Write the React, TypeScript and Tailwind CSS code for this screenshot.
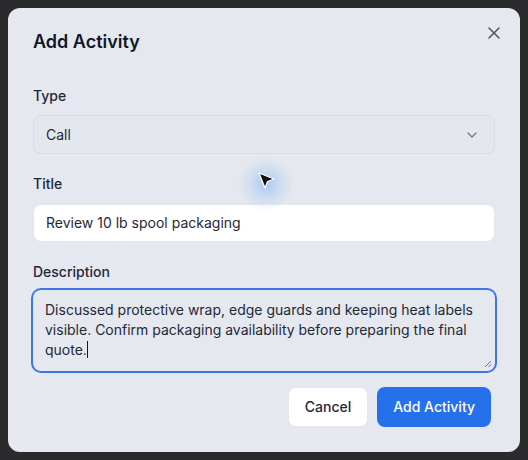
import { ChevronDown, X } from "lucide-react";

export default function App() {
  return (
    <div
      className="w-[528px] h-[460px] bg-[#2b2b2d] p-2"
      style={{ fontFamily: "Inter, 'Noto Sans', sans-serif" }}
    >
      <div className="relative h-full w-full rounded-xl bg-[#e5e8ee] px-[25px] pt-5 pb-[25px]">
        <div className="flex items-center justify-between">
          <h2 className="text-lg leading-7 font-semibold text-[#111827]">Add Activity</h2>
          <button className="-mt-[18px] -mr-[9px] text-[#4b5563]">
            <X className="w-5 h-5" strokeWidth={1.75} />
          </button>
        </div>

        <div className="mt-[30px]">
          <label className="block text-sm leading-5 font-medium text-[#1f2937]">Type</label>
          <div className="mt-[9px] h-[39px] flex items-center justify-between rounded-lg border border-[#d9dde5] bg-[#e4e7ed] pl-3 pr-[14px] text-sm text-[#1f2937]">
            <span>Call</span>
            <ChevronDown className="w-4 h-4 text-[#6b7280]" strokeWidth={1.75} />
          </div>
        </div>

        <div className="mt-5">
          <label className="block text-sm leading-5 font-medium text-[#1f2937]">Title</label>
          <div className="mt-[10px] h-[38px] flex items-center rounded-lg border border-[#e5e7eb] bg-white px-3 text-sm text-[#1f2937]">
            Review 10 lb spool packaging
          </div>
        </div>

        <div className="mt-5">
          <label className="block text-sm leading-5 font-medium text-[#1f2937]">Description</label>
          <div className="relative mt-2 h-[81px] rounded-lg ring-2 ring-[#3b76e8] bg-[#e5e8ee] px-3 py-2.5 text-sm leading-5 text-[#1f2937]">
            Discussed protective wrap, edge guards and keeping heat labels visible. Confirm packaging availability before preparing the final quote.
            <span className="inline-block w-px h-[17px] bg-[#111827] align-middle -mt-[3px]" />
            <svg className="absolute right-[3px] bottom-[3px]" width="8" height="8" viewBox="0 0 8 8">
              <path d="M7 1 L1 7 M7 4.5 L4.5 7" stroke="#6b7280" strokeWidth="1" />
            </svg>
          </div>
        </div>

        <div className="mt-4 flex justify-end gap-[9px] pr-1">
          <button className="h-10 rounded-lg border border-[#e5e7eb] bg-white px-4 text-sm font-medium text-[#1f2937]">
            Cancel
          </button>
          <button className="h-10 rounded-lg bg-[#2570eb] px-4 text-sm font-medium text-white">
            Add Activity
          </button>
        </div>

        <div className="pointer-events-none absolute left-[230px] top-[148px] h-14 w-14 rounded-full bg-[radial-gradient(circle,rgba(96,165,250,0.45)_0%,rgba(96,165,250,0.15)_40%,rgba(96,165,250,0)_70%)]" />
        <svg className="pointer-events-none absolute left-[249px] top-[163px]" width="20" height="20" viewBox="0 0 20 20">
          <path d="M2 2 L17 8 L10.5 10.5 L8 17 Z" fill="#111" stroke="#fff" strokeWidth="1.2" strokeLinejoin="round" />
        </svg>
      </div>
    </div>
  );
}
